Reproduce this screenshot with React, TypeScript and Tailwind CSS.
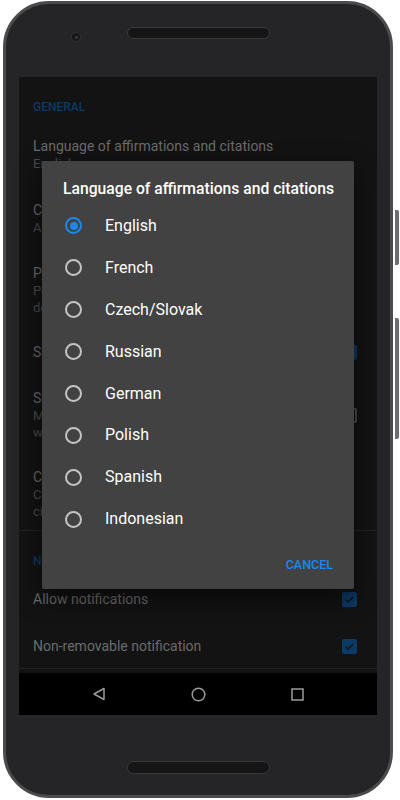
import React from 'react';

const languages = ['English', 'French', 'Czech/Slovak', 'Russian', 'German', 'Polish', 'Spanish', 'Indonesian'];

function Check({ checked }: { checked: boolean }) {
  if (!checked) {
    return <div className="w-[15px] h-[15px] rounded-[2px] border-2 border-[#4a4a4a] shrink-0" />;
  }
  return (
    <div className="w-[15px] h-[15px] rounded-[2px] bg-[#0c3a66] flex items-center justify-center shrink-0">
      <svg width="11" height="11" viewBox="0 0 24 24" fill="none" stroke="#111" strokeWidth="3">
        <path d="M4 12.5l5 5L20 6.5" />
      </svg>
    </div>
  );
}

function Item({ title, sub, pt = 12, pb = 16, check }: { title: string; sub?: string[]; pt?: number; pb?: number; check?: boolean }) {
  return (
    <div className="flex items-center pl-[14px] pr-[20px] shrink-0" style={{ paddingTop: pt, paddingBottom: pb }}>
      <div className="flex-1 min-w-0">
        <div className="text-[14px] leading-[18px] text-[#6b6b6b] whitespace-nowrap">{title}</div>
        {sub && sub.map(s => (
          <div key={s} className="text-[13px] leading-[17px] text-[#4b4b4b] whitespace-nowrap">{s}</div>
        ))}
      </div>
      {check !== undefined && <Check checked={check} />}
    </div>
  );
}

export default function App() {
  return (
    <div className="w-[400px] h-[800px] bg-white overflow-hidden" style={{ fontFamily: 'Roboto, "Noto Sans", sans-serif' }}>
      <div className="relative ml-[3px] mt-[1px] w-[390px] h-[797px] rounded-[46px] bg-[#252527] border-[3px] border-[#4b4b4d] flex flex-col items-center">
        {/* side buttons */}
        <div className="absolute left-[389px] top-[206px] w-[4px] h-[55px] bg-[#6e6e70] rounded-r-[2px]" />
        <div className="absolute left-[389px] top-[314px] w-[4px] h-[121px] bg-[#6e6e70] rounded-r-[2px]" />

        {/* top bezel */}
        <div className="h-[73px] w-full flex items-start pt-[23px] pl-[65px] gap-[46px] shrink-0">
          <div className="mt-[5px] w-[10px] h-[10px] rounded-full bg-[#161618] border border-[#333] flex items-center justify-center">
            <div className="w-[3px] h-[3px] rounded-full bg-[#4a3a48]" />
          </div>
          <div className="w-[143px] h-[12px] rounded-full bg-[#151516] border border-[#3a3a3c]" />
        </div>

        {/* screen */}
        <div className="relative w-[358px] h-[638px] bg-[#131313] flex flex-col shrink-0">
          <div className="flex-1 flex flex-col overflow-hidden">
            <div className="h-[48px] pt-[22px] pl-[14px] text-[12px] leading-[16px] font-medium text-[#0c3a66] shrink-0">GENERAL</div>
            <Item title="Language of affirmations and citations" sub={['English']} pt={12} pb={17} />
            <Item title="Categories" sub={['All categories']} pt={12} pb={16} />
            <Item title="Period of notifications" sub={['Period in which affirmations are', 'delivered during the day']} pt={12} pb={14} />
            <Item title="Show on lock screen" pt={13} pb={16} check={true} />
            <Item title="Sound" sub={['Make sound when a new affirmation', 'will be displayed']} pt={12} pb={14} check={false} />
            <Item title="Color theme" sub={['Choose colors of affirmations and', 'citations']} pt={13} pb={10} />
            <div className="h-px bg-[#222] shrink-0" />
            <div className="h-[46px] pt-[22px] pl-[14px] text-[12px] leading-[16px] font-medium text-[#0c3a66] shrink-0">NOTIFICATIONS</div>
            <Item title="Allow notifications" pt={13} pb={16} check={true} />
            <Item title="Non-removable notification" pt={13} pb={13} check={true} />
            <div className="h-px bg-[#222] shrink-0" />
          </div>

          {/* nav bar */}
          <div className="h-[42px] bg-black flex items-center justify-between px-[73px] shrink-0">
            <svg width="14" height="14" viewBox="0 0 14 14" fill="none" stroke="#9a9a9a" strokeWidth="1.5">
              <path d="M12 1.5v11L2 7z" strokeLinejoin="round" />
            </svg>
            <svg width="15" height="15" viewBox="0 0 15 15" fill="none" stroke="#9a9a9a" strokeWidth="1.5">
              <circle cx="7.5" cy="7.5" r="6.3" />
            </svg>
            <svg width="13" height="13" viewBox="0 0 13 13" fill="none" stroke="#9a9a9a" strokeWidth="1.5">
              <rect x="1" y="1" width="11" height="11" />
            </svg>
          </div>

          {/* dialog */}
          <div className="absolute left-[23px] top-[84px] w-[312px] h-[428px] bg-[#424242] rounded-[2px] shadow-[0_8px_24px_rgba(0,0,0,0.6)] flex flex-col">
            <div className="pt-[18px] pl-[21px] text-[15.7px] leading-[20px] font-medium text-white whitespace-nowrap">
              Language of affirmations and citations
            </div>
            <div className="mt-[6px] flex flex-col">
              {languages.map((l, i) => (
                <div key={l} className="h-[41.9px] flex items-center pl-[23px]">
                  {i === 0 ? (
                    <div className="w-[17px] h-[17px] rounded-full border-2 border-[#1a88f0] flex items-center justify-center">
                      <div className="w-[8px] h-[8px] rounded-full bg-[#1a88f0]" />
                    </div>
                  ) : (
                    <div className="w-[17px] h-[17px] rounded-full border-2 border-[#c4c4c4]" />
                  )}
                  <span className="ml-[23px] text-[16px] text-white">{l}</span>
                </div>
              ))}
            </div>
            <div className="flex-1 flex items-center justify-end pr-[21px] pt-[2px]">
              <span className="text-[12.5px] font-medium text-[#1a88f0]">CANCEL</span>
            </div>
          </div>
        </div>

        {/* bottom bezel */}
        <div className="flex-1 w-full flex items-end justify-center pb-[21px]">
          <div className="w-[143px] h-[13px] rounded-full bg-[#151516] border border-[#3a3a3c]" />
        </div>
      </div>
    </div>
  );
}
